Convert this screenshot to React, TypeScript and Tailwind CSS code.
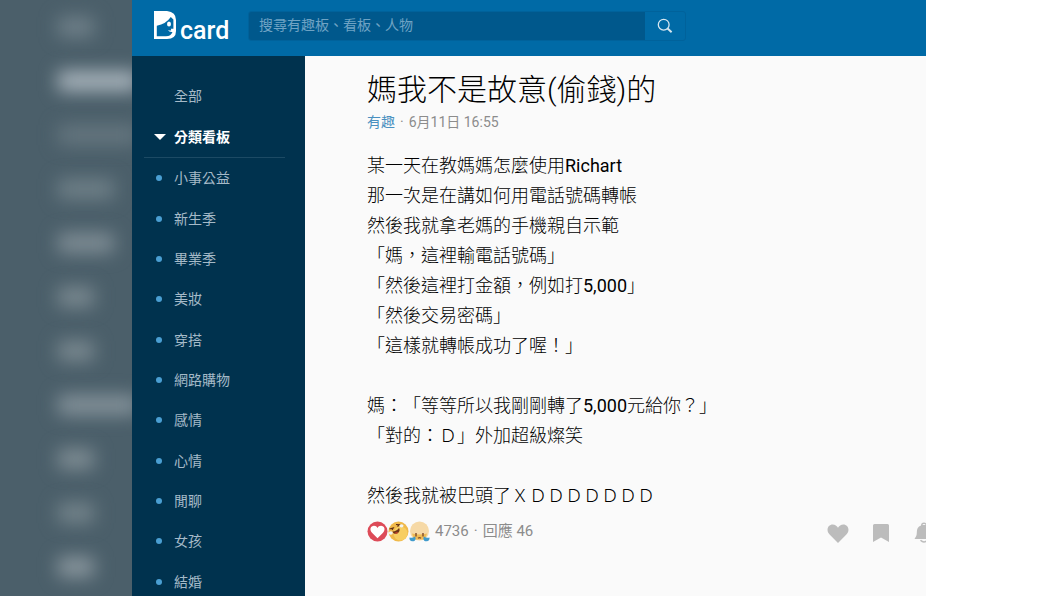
import { useState } from "react";

type Board = { name: string; slug: string };

const boards: Board[] = [
  { name: "小事公益", slug: "charity" },
  { name: "新生季", slug: "freshman" },
  { name: "畢業季", slug: "graduation" },
  { name: "美妝", slug: "makeup" },
  { name: "穿搭", slug: "dressup" },
  { name: "網路購物", slug: "buyonline" },
  { name: "感情", slug: "relationship" },
  { name: "心情", slug: "mood" },
  { name: "閒聊", slug: "talk" },
  { name: "女孩", slug: "girl" },
  { name: "結婚", slug: "marriage" },
];

const lines = [
  "某一天在教媽媽怎麼使用Richart",
  "那一次是在講如何用電話號碼轉帳",
  "然後我就拿老媽的手機親自示範",
  "「媽，這裡輸電話號碼」",
  "「然後這裡打金額，例如打5,000」",
  "「然後交易密碼」",
  "「這樣就轉帳成功了喔！」",
  "",
  "媽：「等等所以我剛剛轉了5,000元給你？」",
  "「對的：Ｄ」外加超級燦笑",
  "",
  "然後我就被巴頭了ＸＤＤＤＤＤＤＤ",
];

// soft glows down the backdrop
const glows = [
  "w-9 bg-[#6f8089]",
  "w-20 bg-[#a9b4bc]",
  "w-20 bg-[#65767f]",
  "w-14 bg-[#6f8088]",
  "w-14 bg-[#7f8d95]",
  "w-9 bg-[#7a8990]",
  "w-9 bg-[#7a8990]",
  "w-20 bg-[#84929a]",
  "w-9 bg-[#7f8d94]",
  "w-9 bg-[#74848b]",
  "w-9 bg-[#8a979e]",
];

export default function App() {
  return (
    <div
      lang="zh-TW"
      className="grid h-screen grid-cols-[132px_minmax(0,1fr)_134px] overflow-hidden bg-white font-[Roboto,'Noto_Sans_CJK_TC',sans-serif] [text-spacing-trim:space-all]"
    >
      <Backdrop />
      <div className="flex min-h-0 flex-col overflow-hidden">
        <Header />
        <div className="flex min-h-0 flex-1">
          <Sidebar />
          <Post />
        </div>
      </div>
    </div>
  );
}

function Backdrop() {
  return (
    <div aria-hidden="true" className="flex flex-col overflow-hidden bg-[#4b5f6a]">
      {glows.map((glow, i) => (
        <div key={i} className="flex h-[54px] shrink-0 items-center pl-[58px]">
          <div className={`h-5 shrink-0 blur-[9px] ${glow}`} />
        </div>
      ))}
    </div>
  );
}

function Header() {
  const [query, setQuery] = useState("");

  return (
    <header className="flex h-14 shrink-0 items-start bg-[#006aa6] pt-[11px] pl-[22px]">
      <a href="#" className="flex w-[94px] items-end gap-1 text-white">
        <LogoMark />
        <span className="text-[25px] leading-4 font-medium">card</span>
      </a>
      <form
        onSubmit={(e) => e.preventDefault()}
        className="flex h-[30px] w-[438px] overflow-hidden rounded-[3px] border border-[#00629b]"
      >
        <input
          type="text"
          aria-label="搜尋"
          value={query}
          onChange={(e) => setQuery(e.target.value)}
          placeholder="搜尋有趣板、看板、人物"
          className="min-w-0 flex-1 bg-[#00588c] px-[10px] pb-0.5 text-sm text-white placeholder-[#6fa3c4] focus:outline-none"
        />
        <button type="submit" aria-label="送出搜尋" className="flex w-10 items-center justify-center text-[#d5e6f0]">
          <svg viewBox="0 0 16 16" className="size-4" fill="none" stroke="currentColor">
            <circle cx="6.7" cy="6.7" r="5.4" strokeWidth="1.3" />
            <path d="M10.6 10.6 14.6 14.3" strokeWidth="2" />
          </svg>
        </button>
      </form>
    </header>
  );
}

function LogoMark() {
  return (
    <svg viewBox="0 0 22 28" className="h-7 w-[22px] shrink-0">
      <path
        fill="#fff"
        fillRule="evenodd"
        d="M0 0h13Q22 1 22 9v11q0 8-9 8H0zM2.800 14.800v10.400H12q5 0 6.500-4.200-3.500.3-4.500-1.900 1.500.6 3.200.1l-.4-1.500 2.600.1V8.500L16.800 6Q12 13 2.800 14.800z"
      />
      <ellipse cx="15" cy="13" rx="2" ry="2.500" fill="#fff" />
    </svg>
  );
}

function Sidebar() {
  return (
    <nav className="flex w-[173px] shrink-0 flex-col overflow-hidden bg-[#00324e] px-3 pt-5 text-sm text-[#a5bac8]">
      <a href="#all" className="flex h-10 items-center pl-[30px]">
        全部
      </a>
      <button type="button" className="mr-2 flex h-[42px] shrink-0 items-center border-b border-[#1c4a64] pl-[10px] font-bold text-white">
        <svg viewBox="0 0 12 6" className="mr-2 h-1.5 w-3" fill="currentColor">
          <path d="M0 0h12L6 6z" />
        </svg>
        分類看板
      </button>
      <ul className="-mb-1.5 grid flex-1 auto-rows-fr">
        {boards.map((board) => (
          <li key={board.slug} className="flex">
            <a href={`#${board.slug}`} className="flex flex-1 items-center gap-3 pl-3">
              <span className="size-1.5 rounded-full bg-[#4a9fd3]" />
              {board.name}
            </a>
          </li>
        ))}
      </ul>
    </nav>
  );
}

// Chinese text is set light, Latin words and numbers stay regular
function Line({ text }: { text: string }) {
  return (
    <p className="min-h-[30px]">
      {text.split(/([A-Za-z0-9,]+)/).map((part, i) =>
        i % 2 === 1 ? (
          <span key={i} className="font-normal">
            {part}
          </span>
        ) : (
          part
        )
      )}
    </p>
  );
}

function Post() {
  return (
    <main className="min-w-0 flex-1 overflow-hidden bg-[#fafafa] pt-4 pl-[62px]">
      <h1 className="text-[30px] leading-9 font-light text-black">媽我不是故意(偷錢)的</h1>
      <p className="mt-1 flex gap-[5px] text-sm leading-5 text-[#8c8c8c]">
        <a href="#funny" className="text-[#4a90c0]">
          有趣
        </a>
        <span>·</span>
        <span>6月11日 16:55</span>
      </p>
      <div className="mt-[19px] text-lg leading-[30px] font-light text-black">
        {lines.map((line, i) => (
          <Line key={i} text={line} />
        ))}
      </div>
      <PostFooter />
    </main>
  );
}

function PostFooter() {
  return (
    <footer className="mt-2 flex h-6 items-center text-[15px] text-[#8c8c8c]">
      <HeartFace />
      <LaughFace />
      <PrayFace />
      <p className="ml-[5px] flex gap-[5px]">
        <span>4736</span>
        <span>·</span>
        <span>回應 46</span>
      </p>
      <div className="-mr-2.5 ml-auto flex shrink-0 items-center gap-[19px] pt-1 text-[#bcbcbc]">
        <button type="button" aria-label="喜歡">
          <svg viewBox="0 0 24 24" className="size-6" fill="currentColor">
            <path d="M12 22 3.600 13.600C-.6 9 2.200 3.500 6.600 3.500c2.500 0 4.300 1.300 5.400 3.200 1.100-1.900 2.900-3.200 5.400-3.200 4.400 0 7.200 5.500 3 10.100z" />
          </svg>
        </button>
        <button type="button" aria-label="收藏">
          <svg viewBox="0 0 24 24" className="size-6" fill="currentColor">
            <path d="M4 4.500q0-1.500 1.500-1.500h13q1.500 0 1.500 1.500V21l-8-4.500L4 21z" />
          </svg>
        </button>
        <button type="button" aria-label="通知">
          <svg viewBox="0 0 24 24" className="size-6" fill="currentColor">
            <path
              fillRule="evenodd"
              d="M9 4.600a3 3 0 0 1 6 0c3 1 4.200 3.500 4.200 7 0 3 .7 4 2.300 6.400h-19C4.100 15.600 4.800 14.500 4.800 11.600c0-3.500 1.200-6 4.200-7zM10.500 4.100h3a1.500 1.200 0 0 0-3 0z"
            />
            <path d="M8.500 19.300q3.500 3.400 7 0" fill="none" stroke="currentColor" strokeWidth="1.500" />
          </svg>
        </button>
      </div>
    </footer>
  );
}

function HeartFace() {
  return (
    <svg viewBox="0 0 21 21" className="size-[21px] shrink-0">
      <circle cx="10.500" cy="10.500" r="10" fill="#dd4b58" />
      <path
        fill="#fff"
        d="M10.500 17.300 5 11.800C2 8.500 3.800 4.800 7 4.800c1.600 0 2.800.9 3.500 2.100.7-1.200 1.900-2.100 3.500-2.100 3.200 0 5 3.700 2 7z"
      />
    </svg>
  );
}

function LaughFace() {
  return (
    <svg viewBox="0 0 21 21" className="size-[21px] shrink-0">
      <circle cx="10.500" cy="10.500" r="10" fill="#f0b94a" />
      <circle cx="12.500" cy="12.500" r="7" fill="#f7ce62" />
      <path d="M4.500 10.500c2.500 0 5-1.300 6.500-3.500 1.500 2 0 5.500-2.800 5.800-2 .1-3.300-.8-3.700-2.300z" fill="#6d3319" />
      <path d="M6.500 12.300c1-1.200 2.500-1.500 3.700-.8-1 1.400-2.500 1.600-3.700.8z" fill="#d3492f" />
      <path d="M1.500 8 5.200 7 4 9M8 3.500l3.200.2L9.500 5.500" fill="none" stroke="#5c2c17" strokeWidth="1.200" />
      <ellipse cx="2.800" cy="12" rx="2" ry="1.800" fill="#f2f4f1" />
      <ellipse cx="13.500" cy="4.800" rx="2" ry="1.600" fill="#f2f4f1" />
    </svg>
  );
}

function PrayFace() {
  return (
    <svg viewBox="0 0 21 21" className="size-[21px] shrink-0">
      <circle cx="10.500" cy="10" r="9.500" fill="#f6d9a6" />
      <path d="M3 12.500q7.500 2 15 0l-2 6H5z" fill="#f0bc55" />
      <path d="M7 12v3.500M14 12v3.500" stroke="#86512d" strokeWidth="1.500" />
      <path d="M9 17.200q1.500-1.200 3 0" fill="none" stroke="#86512d" strokeWidth="1.200" />
      <path d="M6 15.500c1.500 2.500 0 5-2.500 4.800C1 20.200.2 18.500.5 16.500c2 .6 3.800.4 5.500-1zM15 15.500c-1.500 2.500 0 5 2.500 4.800 2.500-.1 3.300-1.800 3-3.800-2 .6-3.800.4-5.500-1z" fill="#409bcc" />
    </svg>
  );
}
